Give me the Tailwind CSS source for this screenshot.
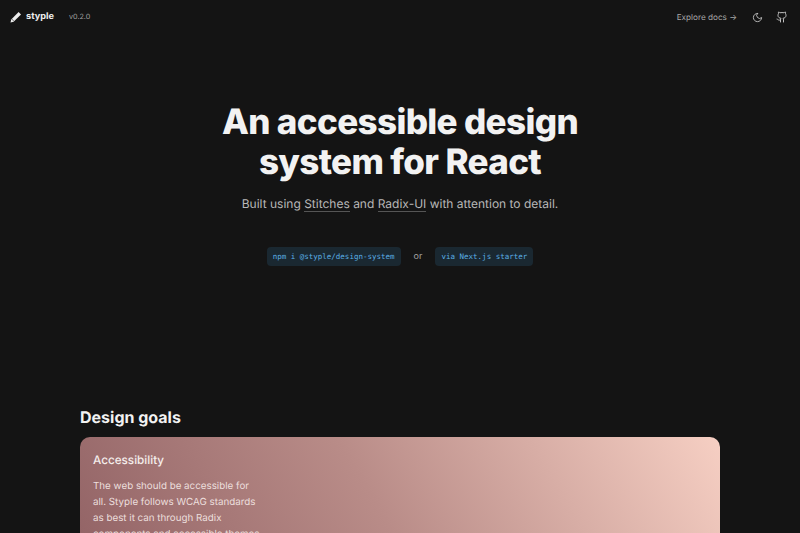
<!doctype html>
<html>
<head>
<meta charset="utf-8">
<script src="https://cdn.jsdelivr.net/npm/@tailwindcss/browser@4"></script>
</head>
<body class="bg-[#141414] font-['Inter',sans-serif] h-[533px] overflow-hidden [text-rendering:geometricPrecision]">
<header class="flex items-center justify-between h-[34px] pl-[10px] pr-[12px]">
  <div class="flex items-center">
    <svg width="12" height="12" viewBox="0 0 12 12" class="mr-[4px]"><path d="M0.5 11.5 L1.2 8.4 L8.6 1 L11 3.4 L3.6 10.8 Z" fill="#ededed"/><path d="M1.6 7.9 L4.1 10.4" stroke="#141414" stroke-width="0.6"/></svg>
    <span class="text-[9.2px] font-bold text-[#ededed] leading-none">styple</span>
    <span class="text-[7.2px] text-[#a0a0a0] ml-[15px] leading-none">v0.2.0</span>
  </div>
  <div class="flex items-center">
    <span class="text-[8.2px] text-[#a8a8a8] leading-none">Explore docs →</span>
    <svg width="11" height="11" viewBox="0 0 24 24" fill="none" stroke="#c0c0c0" stroke-width="2" stroke-linecap="round" stroke-linejoin="round" class="ml-[15px]"><path d="M12 3a6 6 0 0 0 9 9 9 9 0 1 1-9-9Z"/></svg>
    <svg width="12" height="12" viewBox="0 0 24 24" fill="none" stroke="#c0c0c0" stroke-width="2" stroke-linecap="round" stroke-linejoin="round" class="ml-[13px]"><path d="M15 22v-4a4.8 4.8 0 0 0-1-3.5c3 0 6-2 6-5.5.08-1.25-.27-2.48-1-3.5.28-1.15.28-2.35 0-3.5 0 0-1 0-3 1.5-2.64-.5-5.36-.5-8 0C6 2 5 2 5 2c-.3 1.15-.3 2.35 0 3.5A5.403 5.403 0 0 0 4 9c0 3.5 3 5.5 6 5.5-.39.49-.68 1.05-.85 1.65-.17.6-.22 1.23-.15 1.85v4"/><path d="M9 18c-4.51 2-5-2-7-2"/></svg>
  </div>
</header>
<main class="flex flex-col items-center">
  <h1 class="mt-[68px] text-[35px] leading-[40px] font-extrabold text-[#f2f2f2] text-center tracking-[-0.65px]">An accessible design<br>system for React</h1>
  <p class="mt-[11px] text-[12px] leading-[22px] text-[#b8b8b8] text-center">Built using <span class="border-b border-[#555]">Stitches</span> and <span class="border-b border-[#555]">Radix-UI</span> with attention to detail.</p>
  <div class="mt-[32px] flex items-center font-['DejaVu_Sans_Mono',monospace] text-[7.5px] text-[#5ab0e6]">
    <span class="bg-[#1a2831] rounded-[4px] h-[19px] w-[134px] flex items-center justify-center">npm i @styple/design-system</span>
    <span class="font-['Inter',sans-serif] text-[9px] text-[#a0a0a0] mx-[13px]">or</span>
    <span class="bg-[#1a2831] rounded-[4px] h-[19px] w-[98px] flex items-center justify-center">via Next.js starter</span>
  </div>
</main>
<section class="mx-[80px] mt-[140px]">
  <h2 class="text-[16px] leading-[22px] font-bold text-[#f2f2f2]">Design goals</h2>
  <div class="mt-[9px] h-[96px] overflow-hidden rounded-t-[10px] bg-[linear-gradient(60deg,#946567_0%,#b98c88_45%,#f6cfc3_100%)] pt-[15px] pl-[13px]">
    <h3 class="text-[11.7px] leading-[17px] font-medium text-[#f5eeec]">Accessibility</h3>
    <p class="mt-[10px] whitespace-nowrap text-[9.8px] leading-[16px] text-[#ecdfdd]">The web should be accessible for<br>all. Styple follows WCAG standards<br>as best it can through Radix<br>components and accessible themes.</p>
  </div>
</section>
</body>
</html>
